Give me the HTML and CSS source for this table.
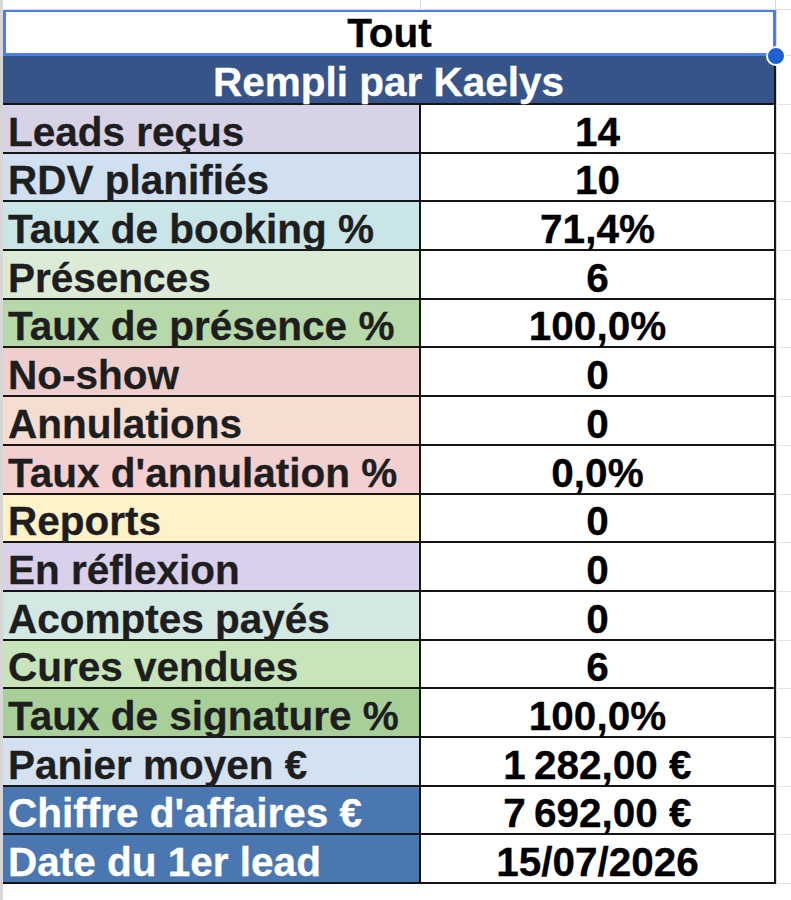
FILE: index.html
```html
<!DOCTYPE html>
<html lang="fr">
<head>
<meta charset="utf-8">
<title>Tout</title>
<link rel="stylesheet" href="styles.css">
</head>
<body>
<div class="sheet">
  <div class="gutter"></div>
  <div class="main">
    <div class="toprow">
      <div class="tc1"></div>
      <div class="tc2"></div>
      <div class="tc3"></div>
    </div>
    <div class="grid">
      <div class="title sel">Tout<span class="handle"></span></div>
      <div class="fill"></div>

      <div class="head">Rempli par Kaelys</div>
      <div class="fill"></div>

      <div class="lab c-lav">Leads reçus</div><div class="val">14</div><div class="fill"></div>
      <div class="lab c-blue">RDV planifiés</div><div class="val">10</div><div class="fill"></div>
      <div class="lab c-cyan">Taux de booking %</div><div class="val">71,4%</div><div class="fill"></div>
      <div class="lab c-lgreen">Présences</div><div class="val">6</div><div class="fill"></div>
      <div class="lab c-green">Taux de présence %</div><div class="val">100,0%</div><div class="fill"></div>
      <div class="lab c-red">No-show</div><div class="val">0</div><div class="fill"></div>
      <div class="lab c-peach">Annulations</div><div class="val">0</div><div class="fill"></div>
      <div class="lab c-red2">Taux d'annulation %</div><div class="val">0,0%</div><div class="fill"></div>
      <div class="lab c-yellow">Reports</div><div class="val">0</div><div class="fill"></div>
      <div class="lab c-lav2">En réflexion</div><div class="val">0</div><div class="fill"></div>
      <div class="lab c-teal">Acomptes payés</div><div class="val">0</div><div class="fill"></div>
      <div class="lab c-green2">Cures vendues</div><div class="val">6</div><div class="fill"></div>
      <div class="lab c-green3">Taux de signature %</div><div class="val">100,0%</div><div class="fill"></div>
      <div class="lab c-blue2">Panier moyen €</div><div class="val">1&#8239;282,00 €</div><div class="fill"></div>
      <div class="lab c-dark">Chiffre d'affaires €</div><div class="val">7&#8239;692,00 €</div><div class="fill"></div>
      <div class="lab c-dark">Date du 1er lead</div><div class="val">15/07/2026</div><div class="fill"></div>
    </div>
  </div>
</div>
</body>
</html>
```

FILE: styles.css
```css
html, body {
  margin: 0;
  padding: 0;
  background: #ffffff;
}

body {
  width: 791px;
  height: 900px;
  overflow: hidden;
  font-family: "Liberation Sans", Arial, sans-serif;
  font-weight: bold;
  font-size: 40.5px;
  -webkit-text-stroke: 0.3px currentColor;
}

.sheet {
  display: flex;
  height: 900px;
}

.gutter {
  width: 3px;
  background: #d6d6d6;
  flex: none;
}

.main {
  flex: 1;
  display: flex;
  flex-direction: column;
}

.toprow {
  height: 10px;
  display: grid;
  grid-template-columns: 418px 355px 1fr;
}

.tc1, .tc2 {
  border-right: 1px solid #d8d8d8;
  border-bottom: 1px solid #e2e2e2;
  box-sizing: border-box;
}

.tc3 {
  border-bottom: 1px solid #e2e2e2;
}

.grid {
  display: grid;
  grid-template-columns: 418px 355px 1fr;
  grid-template-rows: 46px 49px repeat(16, 48.7px);
}

.title {
  grid-column: 1 / 3;
  position: relative;
  display: flex;
  align-items: flex-end;
  justify-content: center;
  line-height: 40px;
  color: #000;
  background: #fff;
  box-sizing: border-box;
}

.sel {
  border: 2px solid #4a7fe0;
  border-left-width: 3px;
  border-right-width: 3px;
  border-bottom-width: 3px;
}

.handle {
  position: absolute;
  right: -13px;
  bottom: -13px;
  width: 16px;
  height: 16px;
  border-radius: 50%;
  background: #1e5fd4;
  border: 2.5px solid #ffffff;
  z-index: 2;
  -webkit-text-stroke: 0;
}

.head {
  grid-column: 1 / 3;
  background: #34548a;
  color: #ffffff;
  display: flex;
  align-items: flex-end;
  justify-content: center;
  line-height: 42px;
  border-bottom: 2px solid #151515;
  border-right: 2px solid #151515;
  box-sizing: border-box;
}

.fill {
  border-bottom: 1px solid #e2e2e2;
  border-left: 1px solid #d8d8d8;
  box-sizing: border-box;
}

.lab {
  display: flex;
  align-items: flex-end;
  padding-left: 5px;
  line-height: 40px;
  color: #1e1e1e;
  border-bottom: 2px solid #151515;
  border-right: 2px solid #151515;
  box-sizing: border-box;
  white-space: nowrap;
}

.val {
  display: flex;
  align-items: flex-end;
  justify-content: center;
  line-height: 40px;
  color: #000;
  background: #fff;
  border-bottom: 2px solid #151515;
  border-right: 2px solid #151515;
  box-sizing: border-box;
  white-space: nowrap;
}

.c-lav { background: #d8d2e7; }
.c-blue { background: #d0e0f1; }
.c-cyan { background: #c9e5e8; }
.c-lgreen { background: #dcebd6; }
.c-green { background: #b7d9a9; }
.c-red { background: #efcece; }
.c-peach { background: #f5ddd1; }
.c-red2 { background: #f3cfcf; }
.c-yellow { background: #fef2c8; }
.c-lav2 { background: #d9d0ec; }
.c-teal { background: #d3e8e3; }
.c-green2 { background: #c7e4bb; }
.c-green3 { background: #a9cf98; }
.c-blue2 { background: #d3e1f1; }
.c-dark { background: #4a77b1; color: #ffffff; }
```
